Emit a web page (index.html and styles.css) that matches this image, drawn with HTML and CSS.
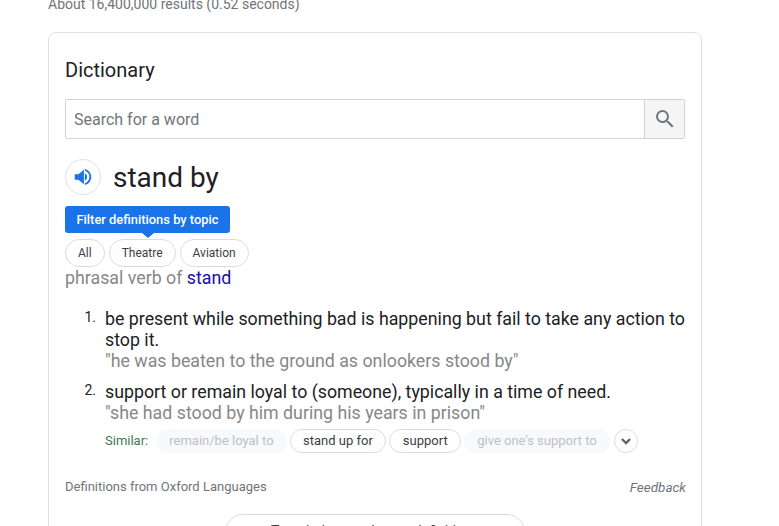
FILE: index.html
```html
<!DOCTYPE html>
<html lang="en">
<head>
    <meta charset="UTF-8">
    <meta name="viewport" content="width=device-width, initial-scale=1.0">
    <title>stand by - Dictionary</title>
    <link rel="stylesheet" href="styles.css">
</head>
<body>

<p class="stats">About 16,400,000 results (0.52 seconds)</p>

<div class="card">
    <h2 class="card-title">Dictionary</h2>

    <!-- Search box -->
    <div class="search">
        <div class="search-input">Search for a word</div>
        <div class="search-btn">
            <svg width="24" height="24" viewBox="0 0 24 24"><path fill="#70757a" d="M15.5 14h-.79l-.28-.27A6.47 6.47 0 0 0 16 9.5 6.5 6.5 0 1 0 9.5 16c1.61 0 3.09-.59 4.23-1.57l.27.28v.79l5 4.99L20.49 19l-4.99-5zm-6 0C7.01 14 5 11.99 5 9.5S7.01 5 9.5 5 14 7.01 14 9.5 11.99 14 9.5 14z"/></svg>
        </div>
    </div>

    <!-- Headword -->
    <div class="headword">
        <div class="speaker">
            <svg width="22" height="22" viewBox="0 0 24 24"><path fill="#1a73e8" d="M3 9v6h4l6 5V4L7 9H3zm13.5 3c0-1.77-1.02-3.29-2.5-4.03v8.05c1.48-.73 2.5-2.25 2.5-4.02z"/><path fill="#1a73e8" d="M14 3.23v2.06c2.89.86 5 3.54 5 6.71s-2.11 5.85-5 6.71v2.06c4.01-.91 7-4.49 7-8.77s-2.99-7.86-7-8.77z"/></svg>
        </div>
        <span class="word">stand by</span>
    </div>

    <!-- Topic filter -->
    <div class="tip">Filter definitions by topic</div>
    <div class="topics">
        <span class="chip">All</span>
        <span class="chip">Theatre</span>
        <span class="chip">Aviation</span>
    </div>

    <div class="pos">phrasal verb of <a class="pos-link" href="#">stand</a></div>

    <!-- Definitions -->
    <ol class="defs">
        <li class="def">
            <span class="def-num">1.</span>
            <div class="def-body">
                <div>be present while something bad is happening but fail to take any action to stop it.</div>
                <div class="example">"he was beaten to the ground as onlookers stood by"</div>
            </div>
        </li>
        <li class="def">
            <span class="def-num">2.</span>
            <div class="def-body">
                <div>support or remain loyal to (someone), typically in a time of need.</div>
                <div class="example">"she had stood by him during his years in prison"</div>
                <div class="similar">
                    <span class="similar-label">Similar:</span>
                    <span class="syn syn-off">remain/be loyal to</span>
                    <span class="syn">stand up for</span>
                    <span class="syn">support</span>
                    <span class="syn syn-off">give one's support to</span>
                    <span class="more">
                        <svg width="14" height="14" viewBox="0 0 24 24"><path fill="none" stroke="#5f6368" stroke-width="4" d="M5 8.5l7 7 7-7"/></svg>
                    </span>
                </div>
            </div>
        </li>
    </ol>

    <div class="source">
        <span>Definitions from Oxford Languages</span>
        <span class="feedback">Feedback</span>
    </div>

    <div class="translate">
        <div class="translate-btn">Translations and more definitions</div>
    </div>
</div>

</body>
</html>
```

FILE: styles.css
```css
html, body {
    height: 526px;
    overflow: hidden;
}

body {
    margin: 0;
    padding-left: 48px;
    font-family: Roboto, Arial, sans-serif;
    background-color: #fff;
    color: #202124;
}

.stats {
    margin: -7px 0 0;
    height: 39px;
    line-height: 22px;
    font-size: 14px;
    color: #70757a;
}

.card {
    width: 654px;
    box-sizing: border-box;
    padding: 22px 16px 0;
    border: 1px solid #dfe1e5;
    border-radius: 8px;
}

.card-title {
    margin: 0;
    font-size: 20px;
    font-weight: 400;
    line-height: 30px;
}

.search {
    display: flex;
    width: 620px;
    height: 40px;
    margin-top: 14px;
    box-sizing: border-box;
    border: 1px solid #d3d3d3;
    border-radius: 2px;
}

.search-input {
    flex: 1;
    padding-left: 8px;
    font-size: 16px;
    line-height: 40px;
    color: #70757a;
}

.search-btn {
    display: flex;
    align-items: center;
    justify-content: center;
    width: 39px;
    border-left: 1px solid #d3d3d3;
    background-color: #f5f5f5;
}

.headword {
    display: flex;
    align-items: center;
    margin-top: 20px;
}

.speaker {
    display: flex;
    align-items: center;
    justify-content: center;
    width: 36px;
    height: 36px;
    margin-right: 12px;
    box-sizing: border-box;
    border: 1px solid #dfe1e5;
    border-radius: 50%;
}

.word {
    padding-top: 2px;
    font-size: 28px;
    line-height: 34px;
}

.tip {
    position: relative;
    width: 165px;
    height: 27px;
    margin-top: 11px;
    border-radius: 3px;
    background-color: #1a73e8;
    color: #fff;
    font-size: 12.9px;
    font-weight: 500;
    line-height: 27px;
    text-align: center;
}

.tip::after {
    content: "";
    position: absolute;
    left: 77px;
    bottom: -5px;
    border-left: 6px solid transparent;
    border-right: 6px solid transparent;
    border-top: 5px solid #1a73e8;
}

.topics {
    display: flex;
    gap: 4px;
    margin-top: 6px;
}

.chip {
    height: 28px;
    padding: 0 12px;
    box-sizing: border-box;
    border: 1px solid #dadce0;
    border-radius: 14px;
    font-size: 12px;
    line-height: 26px;
    color: #3c4043;
}

.pos {
    font-size: 17.8px;
    line-height: 22px;
    color: #878787;
}

.pos-link {
    color: #1a0dab;
    text-decoration: none;
}

.defs {
    margin: 19px 0 0;
    padding: 0;
    list-style: none;
}

.def {
    display: flex;
    margin-bottom: 10px;
    font-size: 17.8px;
    line-height: 21px;
}

.def-num {
    width: 40px;
    padding-right: 9px;
    box-sizing: border-box;
    font-size: 14px;
    line-height: 18px;
    text-align: right;
}

.def-body {
    flex: 1;
}

.example {
    color: #878787;
}

.similar {
    display: flex;
    align-items: center;
    gap: 3px;
    margin-top: 6px;
    font-size: 13px;
    line-height: 22px;
}

.similar-label {
    margin-right: 5px;
    color: #3c7a55;
}

.syn {
    padding: 0 12.5px;
    border: 1px solid #dadce0;
    border-radius: 12px;
    color: #3c4043;
}

.syn-off {
    padding: 0 12px;
    border-color: #f8f9fa;
    background-color: #f8f9fa;
    color: #bdc1c6;
}

.more {
    display: flex;
    align-items: center;
    justify-content: center;
    width: 24px;
    height: 24px;
    margin-left: 1px;
    box-sizing: border-box;
    border: 1px solid #dadce0;
    border-radius: 50%;
}

.source {
    display: flex;
    justify-content: space-between;
    margin-top: 25px;
    font-size: 13px;
    line-height: 18px;
    color: #70757a;
}

.feedback {
    margin-right: -1px;
    font-size: 13.5px;
    font-style: italic;
}

.translate {
    display: flex;
    justify-content: center;
    margin-top: 18px;
}

.translate-btn {
    width: 300px;
    height: 36px;
    box-sizing: border-box;
    border: 1px solid #dadce0;
    border-radius: 18px;
    font-size: 14px;
    line-height: 33px;
    text-align: center;
    color: #3c4043;
}
```
